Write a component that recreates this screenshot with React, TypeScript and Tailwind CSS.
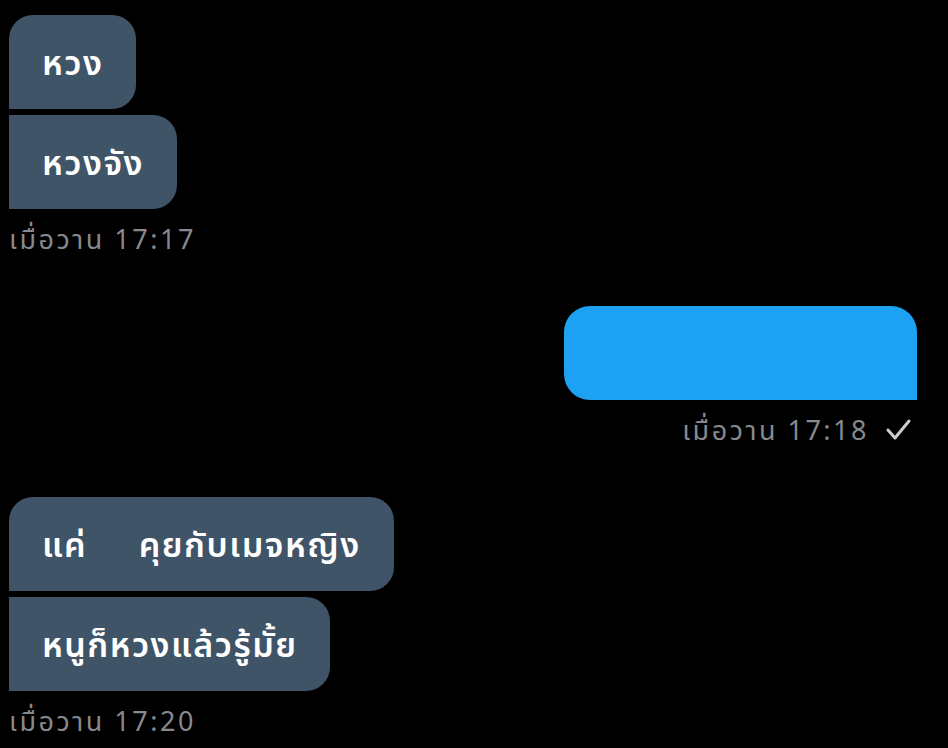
import React from 'react';

const font = { fontFamily: '"Noto Sans", "Noto Sans Thai", "DejaVu Sans", sans-serif' };

type Msg = { text: string };

function IncomingGroup({ msgs, time }: { msgs: Msg[]; time: string }) {
  return (
    <div className="flex flex-col items-start gap-[6px] pl-[9px]">
      {msgs.map((m, i) => (
        <div
          key={i}
          className={`h-[94px] flex items-center bg-[#3f5467] text-white text-[34px] font-semibold tracking-[1.5px] whitespace-pre px-[33px] rounded-r-[24px] ${
            i === 0 ? 'rounded-tl-[24px]' : ''
          }`}
        >
          {m.text}
        </div>
      ))}
      <div className="text-[27px] tracking-[2.5px] text-[#868a8f] leading-none mt-[10px]">{time}</div>
    </div>
  );
}

export default function App() {
  return (
    <div className="w-[948px] h-[748px] bg-black overflow-hidden pt-[15px]" style={font}>
      <IncomingGroup msgs={[{ text: 'หวง' }, { text: 'หวงจัง' }]} time="เมื่อวาน 17:17" />

      {/* ข้อความที่ส่งออก */}
      <div className="flex flex-col items-end pr-[31px] mt-[54px]">
        <div className="w-[353px] h-[94px] bg-[#1da1f2] rounded-t-[26px] rounded-bl-[26px]" />
        <div className="flex items-center gap-[16px] mt-[16px] text-[27px] tracking-[2.5px] text-[#868a8f] leading-none mr-[5px]">
          <span>เมื่อวาน 17:18</span>
          <svg width="27" height="23" viewBox="0 0 27 23" fill="none">
            <path d="M3 12 L10 20 L24 3" stroke="#c9cdd1" strokeWidth="3" strokeLinecap="round" strokeLinejoin="round" />
          </svg>
        </div>
      </div>

      <div className="mt-[54px]">
        <IncomingGroup
          msgs={[{ text: 'แค่     คุยกับเมจหญิง' }, { text: 'หนูก็หวงแล้วรู้มั้ย' }]}
          time="เมื่อวาน 17:20"
        />
      </div>
    </div>
  );
}
